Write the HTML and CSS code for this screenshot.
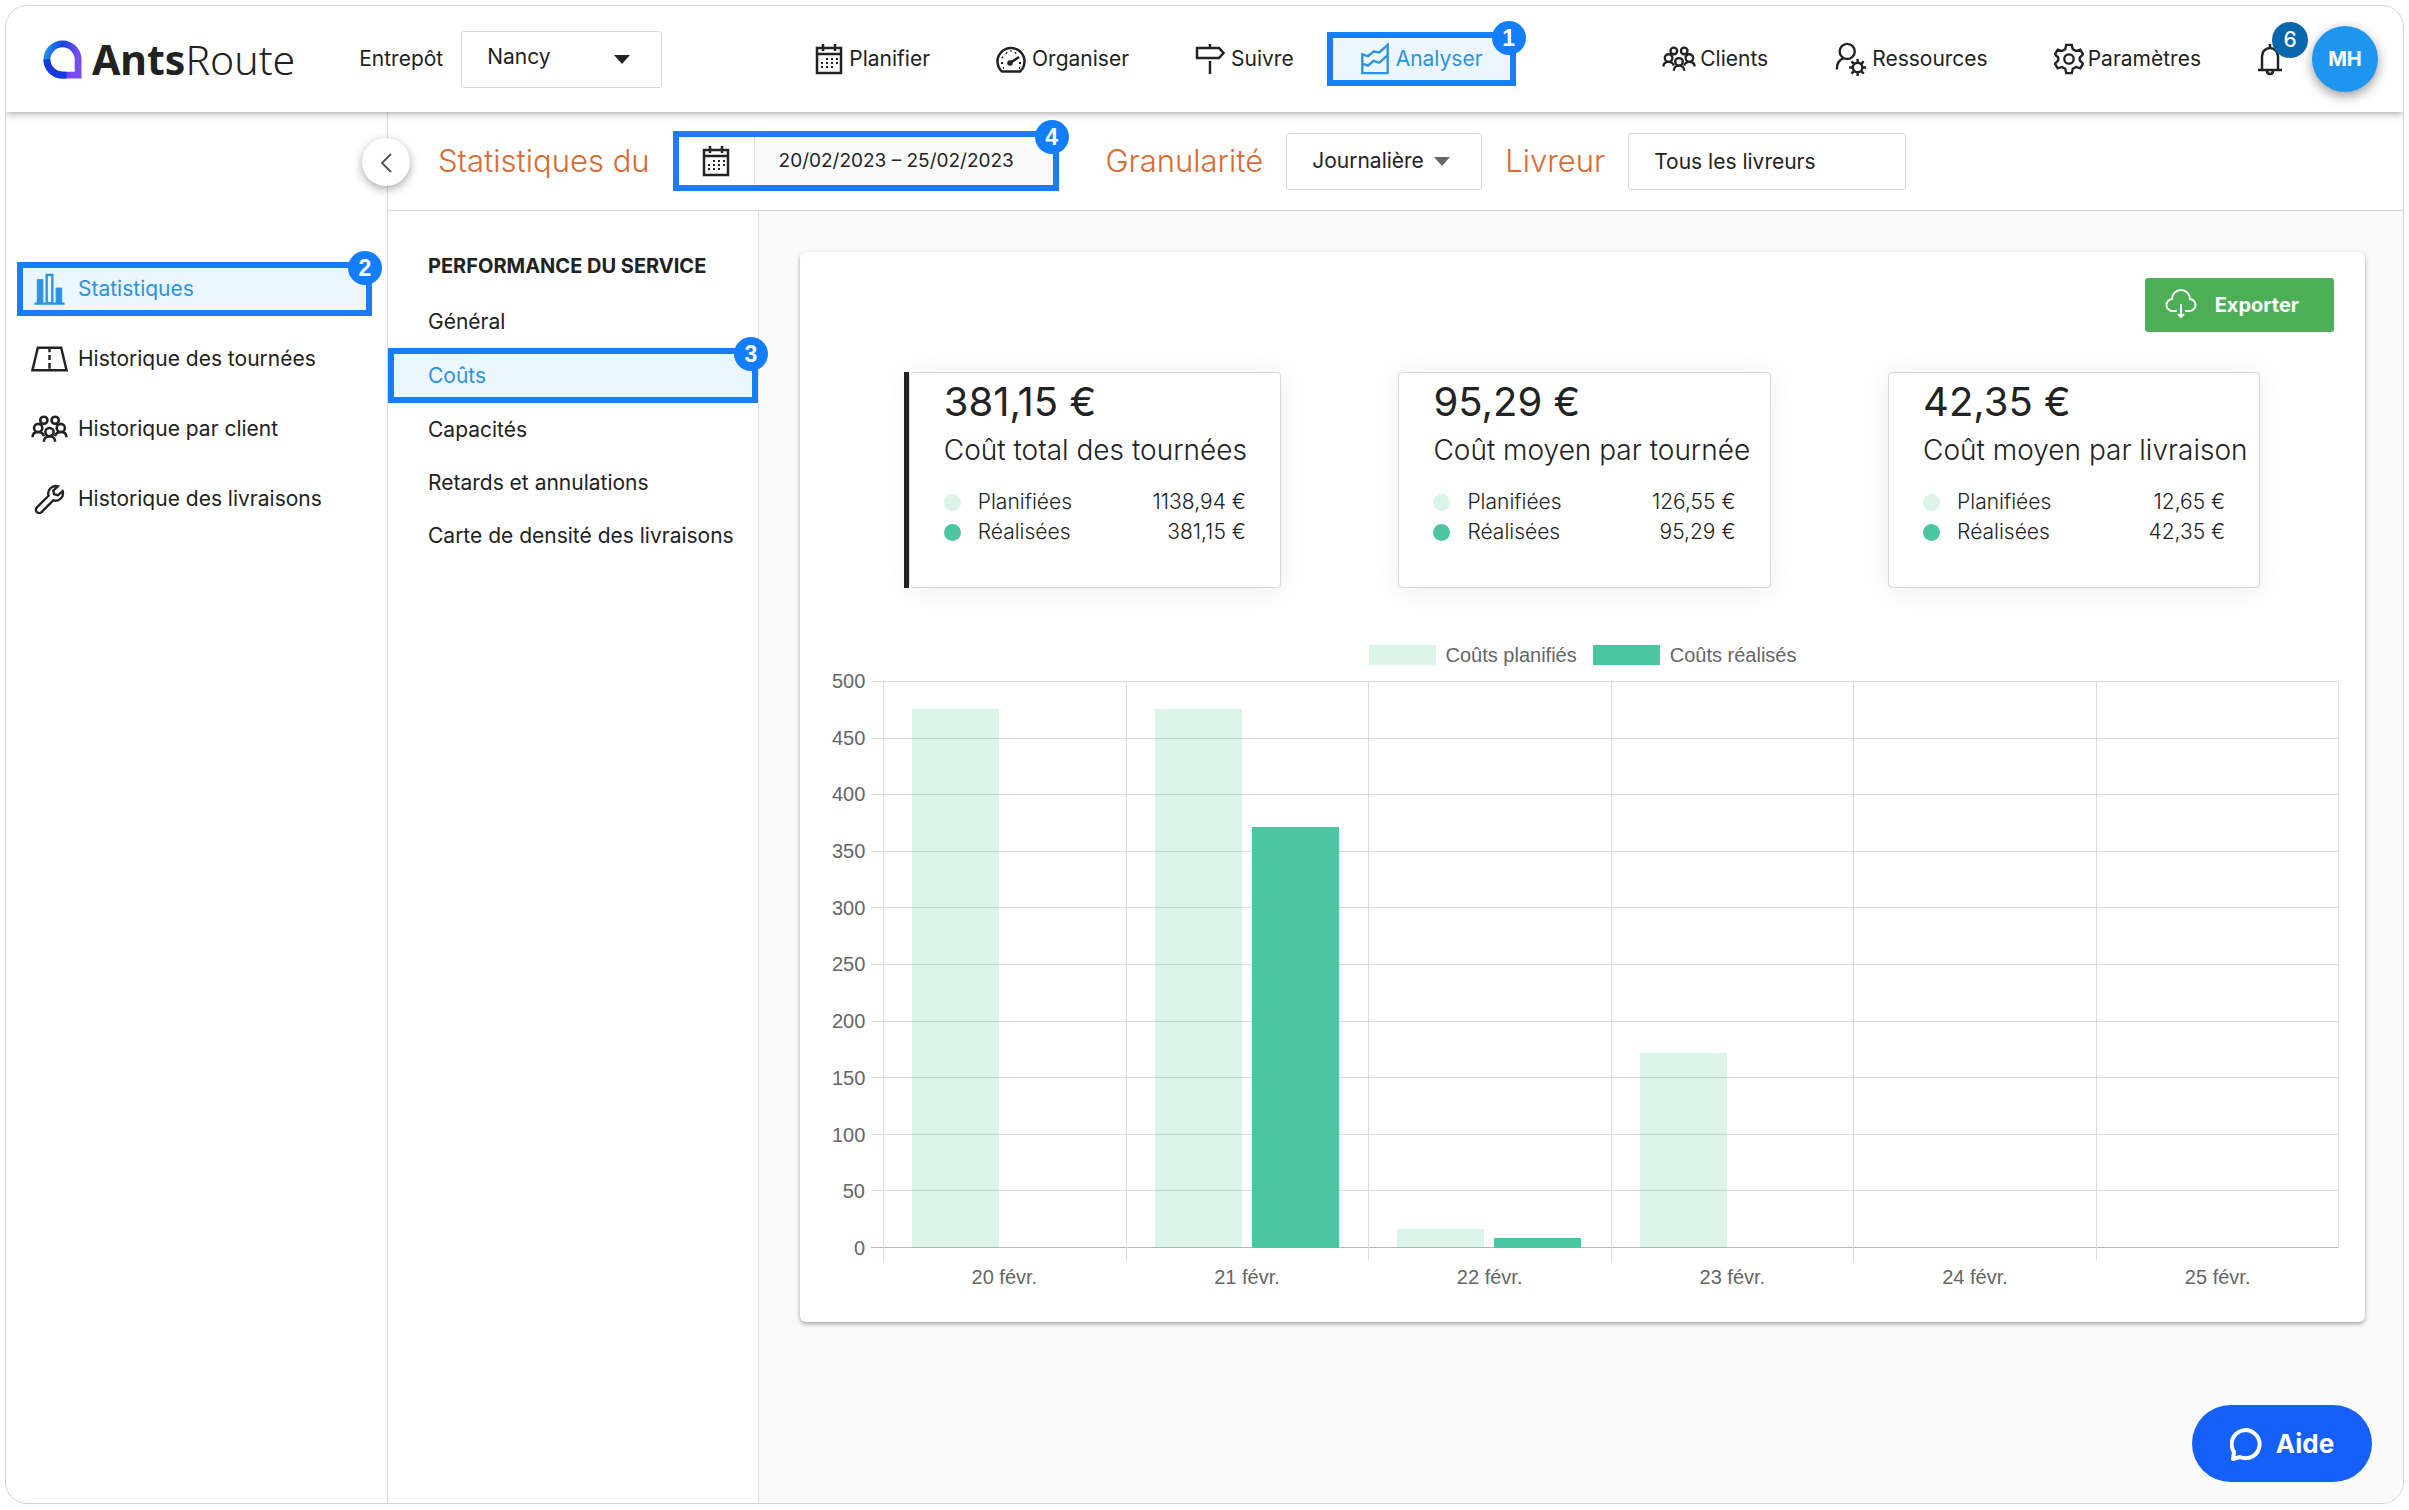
FILE: index.html
```html
<!DOCTYPE html>
<html lang="fr">
<head>
    <meta charset="UTF-8">
    <meta name="viewport" content="width=device-width, initial-scale=1.0">
    <title>AntsRoute - Statistiques</title>
    <link rel="stylesheet" href="styles.css">
</head>
<body>
    <!-- icônes partagées -->
    <svg class="sprite" aria-hidden="true">
        <symbol id="icon-calendar" viewBox="0 0 28 32">
            <path d="M2 5h24v25H2zM2 11h24M8 1v7M20 1v7"/>
            <path d="M11 16h2M16 16h2M21 16h2M6 20h2M11 20h2M16 20h2M21 20h2M6 24h2M11 24h2M16 24h2" stroke-width="2"/>
        </symbol>
        <symbol id="icon-people" viewBox="0 0 36 28">
            <circle cx="12.500" cy="5.500" r="3.500"/>
            <circle cx="23.500" cy="5.500" r="3.500"/>
            <circle cx="7" cy="13" r="4"/>
            <circle cx="29" cy="13" r="4"/>
            <circle cx="18" cy="17" r="4"/>
            <path d="M1.500 22c0-3 2-5 5.500-5s5 2 5.500 4M34.500 22c0-3-2-5-5.500-5s-5 2-5.500 4M12.500 26.500c0-3 2-5.500 5.500-5.500s5.500 2.500 5.500 5.500"/>
        </symbol>
    </svg>

    <div class="window">
        <header class="topbar">
            <a class="logo" href="#">
                <svg class="logo-mark" viewBox="0 0 40 40" aria-hidden="true">
                    <defs>
                        <linearGradient id="logo-blue" x1="0" y1="0" x2="1" y2="0.300">
                            <stop offset="0" stop-color="#2196f3"/>
                            <stop offset="0.450" stop-color="#1344dc"/>
                            <stop offset="1" stop-color="#7a4bf0"/>
                        </linearGradient>
                    </defs>
                    <path d="M20 4a16 16 0 0 0 0 32h16V20A16 16 0 0 0 20 4z" fill="none" stroke="url(#logo-blue)" stroke-width="7"/>
                    <path d="M4 20a16 16 0 0 0 16 16h4" fill="none" stroke="#1338e0" stroke-width="7"/>
                </svg>
                <span class="logo-text"><b>Ants</b>Route</span>
            </a>

            <div class="depot">
                <label for="depot">Entrepôt</label>
                <div class="select-box depot-select">
                    <select id="depot">
                        <option>Nancy</option>
                    </select>
                </div>
            </div>

            <nav class="nav nav-main">
                <a href="#">
                    <svg class="icon icon-cal" viewBox="0 0 28 32"><use href="#icon-calendar"/></svg>
                    Planifier
                </a>
                <a href="#">
                    <svg class="icon" viewBox="0 0 30 30">
                        <path d="M6 27.500A13.500 13.500 0 1 1 24 27.500z"/>
                        <path d="M14 19l9-6"/>
                        <circle cx="14" cy="19" r="1.500"/>
                        <path d="M5 19h2M6 13l1 1M10 8.500l1 1M15 6.500v1M20 8.500l-1 1M25 19h-2M7 24h1M23 24h1" stroke-width="2"/>
                    </svg>
                    Organiser
                </a>
                <a href="#">
                    <svg class="icon" viewBox="0 0 30 32">
                        <path d="M2 5h22l4.500 5-4.500 5H2zM15 1v4M15 18v13"/>
                    </svg>
                    Suivre
                </a>
                <a href="#" class="active framed">
                    <svg class="icon" viewBox="0 0 30 34">
                        <path d="M1.500 12l6 2 6-5 6 1 9-8v30h-27zM1.500 22l6 2 6-5 6 2 9-8"/>
                    </svg>
                    Analyser
                    <span class="step">1</span>
                </a>
            </nav>

            <nav class="nav nav-secondary">
                <a href="#">
                    <svg class="icon icon-wide" viewBox="0 0 36 28"><use href="#icon-people"/></svg>
                    Clients
                </a>
                <a href="#">
                    <svg class="icon icon-wide" viewBox="0 0 34 36">
                        <circle cx="13" cy="10" r="8"/>
                        <path d="M9 17c-5 2-7 6-7 12"/>
                        <circle cx="24" cy="27" r="5"/>
                        <path d="M24 27h.1M24 22v-4M24 32v4M19 27h-4M29 27h4M20.500 23.500l-3-3M27.500 23.500l3-3M20.500 30.500l-3 3M27.500 30.500l3 3"/>
                    </svg>
                    Ressources
                </a>
                <a href="#">
                    <svg class="icon" viewBox="0 0 32 34">
                        <path d="M13 2h6l1 4.500 3.500 2 4.500-1.500 3 5-3.500 3.500v3l3.500 3.500-3 5-4.500-1.500-3.500 2-1 4.500h-6l-1-4.500-3.500-2L4 27l-3-5 3.500-3.500v-3L1 12l3-5 4.500 1.500 3.500-2z"/>
                        <circle cx="16" cy="17" r="5"/>
                    </svg>
                    Paramètres
                </a>
            </nav>

            <div class="user">
                <button type="button" class="bell" aria-label="Notifications">
                    <svg class="icon" viewBox="0 0 28 34">
                        <path d="M6 27V14a8 8 0 0 1 16 0v13M2 28h24M14 2v4M11 29c0 4 6 4 6 0"/>
                    </svg>
                    <span class="bell-count">6</span>
                </button>
                <button type="button" class="avatar">MH</button>
            </div>
        </header>

        <div class="layout">
            <aside class="sidebar">
                <button type="button" class="collapse" aria-label="Réduire le menu">
                    <svg viewBox="0 0 14 22"><path d="M12 2L3 11l9 9"/></svg>
                </button>
                <a href="#" class="active framed">
                    <svg class="icon icon-stats" viewBox="0 0 34 34">
                        <path d="M1 32.500h32"/>
                        <path d="M4 7h6v25H4zM24 16h6v16h-6z" fill="currentColor" stroke-width="1"/>
                        <path d="M14 2h6v30h-6z"/>
                    </svg>
                    Statistiques
                    <span class="step">2</span>
                </a>
                <a href="#">
                    <svg class="icon" viewBox="0 0 38 26">
                        <path d="M7 1.500h24l5.500 23h-35zM19 2v4M19 9v5M19 17v6"/>
                    </svg>
                    Historique des tournées
                </a>
                <a href="#">
                    <svg class="icon" viewBox="0 0 36 28"><use href="#icon-people"/></svg>
                    Historique par client
                </a>
                <a href="#">
                    <svg class="icon icon-wrench" viewBox="0 0 32 32">
                        <path d="M25 2.500a8 8 0 0 0-10 10L2.500 25a3.500 3.500 0 0 0 5 5L20 17.500a8 8 0 0 0 10-10l-5 4.500-4-1-1-4z"/>
                    </svg>
                    Historique des livraisons
                </a>
            </aside>

            <div class="content">
                <form class="filters">
                    <label class="filter-label" for="period">Statistiques du</label>
                    <div class="period framed">
                        <button type="button" class="period-button" aria-label="Calendrier">
                            <svg class="icon icon-cal" viewBox="0 0 28 32"><use href="#icon-calendar"/></svg>
                        </button>
                        <input type="text" id="period" value="20/02/2023 – 25/02/2023">
                        <span class="step">4</span>
                    </div>
                    <label class="filter-label" for="granularity">Granularité</label>
                    <div class="select-box granularity-select">
                        <select id="granularity">
                            <option>Journalière</option>
                        </select>
                    </div>
                    <label class="filter-label" for="driver">Livreur</label>
                    <input type="text" id="driver" class="driver" value="Tous les livreurs">
                </form>

                <div class="page">
                    <nav class="submenu">
                        <h2>PERFORMANCE DU SERVICE</h2>
                        <a href="#">Général</a>
                        <a href="#" class="active framed">Coûts<span class="step">3</span></a>
                        <a href="#">Capacités</a>
                        <a href="#">Retards et annulations</a>
                        <a href="#">Carte de densité des livraisons</a>
                    </nav>

                    <main class="main">
                        <section class="panel">
                            <button type="button" class="export">
                                <svg class="icon" viewBox="0 0 32 28">
                                    <path d="M12 20H8a6 6 0 0 1-1-12 9 9 0 0 1 18 0 6 6 0 0 1-1 12h-4M16 13v12M13 23l3 3 3-3"/>
                                </svg>
                                Exporter
                            </button>

                            <div class="stats">
                                <article class="stat selected">
                                    <strong>381,15 €</strong>
                                    <h3>Coût total des tournées</h3>
                                    <p><i class="dot planned"></i>Planifiées<span>1138,94 €</span></p>
                                    <p><i class="dot done"></i>Réalisées<span>381,15 €</span></p>
                                </article>
                                <article class="stat">
                                    <strong>95,29 €</strong>
                                    <h3>Coût moyen par tournée</h3>
                                    <p><i class="dot planned"></i>Planifiées<span>126,55 €</span></p>
                                    <p><i class="dot done"></i>Réalisées<span>95,29 €</span></p>
                                </article>
                                <article class="stat">
                                    <strong>42,35 €</strong>
                                    <h3>Coût moyen par livraison</h3>
                                    <p><i class="dot planned"></i>Planifiées<span>12,65 €</span></p>
                                    <p><i class="dot done"></i>Réalisées<span>42,35 €</span></p>
                                </article>
                            </div>

                            <div class="chart">
                                <div class="legend">
                                    <span><i class="planned"></i>Coûts planifiés</span>
                                    <span><i class="done"></i>Coûts réalisés</span>
                                </div>
                                <div class="chart-body">
                                    <div class="y-axis">
                                        <span>500</span><span>450</span><span>400</span><span>350</span>
                                        <span>300</span><span>250</span><span>200</span><span>150</span>
                                        <span>100</span><span>50</span><span>0</span>
                                    </div>
                                    <div class="plot">
                                        <div class="lines">
                                            <i></i><i></i><i></i><i></i><i></i><i></i><i></i><i></i><i></i><i></i><i></i>
                                        </div>
                                        <div class="day">
                                            <div class="bar planned" style="height: 95%"></div>
                                            <div class="bar done" style="height: 0%"></div>
                                        </div>
                                        <div class="day">
                                            <div class="bar planned" style="height: 95%"></div>
                                            <div class="bar done" style="height: 74.2%"></div>
                                        </div>
                                        <div class="day">
                                            <div class="bar planned" style="height: 3.4%"></div>
                                            <div class="bar done" style="height: 1.8%"></div>
                                        </div>
                                        <div class="day">
                                            <div class="bar planned" style="height: 34.4%"></div>
                                            <div class="bar done" style="height: 0%"></div>
                                        </div>
                                        <div class="day"></div>
                                        <div class="day"></div>
                                    </div>
                                </div>
                                <div class="x-axis">
                                    <span>20 févr.</span><span>21 févr.</span><span>22 févr.</span>
                                    <span>23 févr.</span><span>24 févr.</span><span>25 févr.</span>
                                </div>
                            </div>
                        </section>
                    </main>
                </div>
            </div>
        </div>

        <button type="button" class="help">
            <svg class="icon" viewBox="0 0 32 34">
                <path d="M3 32l1-7a14 14 0 1 1 6 5z"/>
            </svg>
            Aide
        </button>
    </div>
</body>
</html>
```

FILE: styles.css
```css
* {
    box-sizing: border-box;
}
body {
    margin: 5px 5px 6px;
    background: #fff;
    color: #222;
    font-family: Inter, "Open Sans", sans-serif;
    font-size: 21px;
    line-height: 30px;
}
a {
    color: inherit;
    text-decoration: none;
}
button,
input,
select {
    font: inherit;
    color: inherit;
}
button {
    padding: 0;
    border: none;
    background: none;
    cursor: pointer;
}
.sprite {
    display: none;
}
.icon {
    flex: none;
    width: 30px;
    height: 32px;
    fill: none;
    stroke: currentColor;
    stroke-width: 2.5;
}
.window {
    position: relative;
    display: flex;
    flex-direction: column;
    min-height: calc(100vh - 11px);
    border: 1px solid #d4d4d4;
    border-radius: 22px;
    overflow: hidden;
}

/* repères numérotés */
.framed {
    position: relative;
    border: 6px solid #1a7df5;
}
.active {
    background: #ecf6fe;
    color: #2b93e0;
}
.step {
    position: absolute;
    z-index: 2;
    top: -17px;
    right: -16px;
    width: 34px;
    height: 34px;
    border-radius: 50%;
    background: #137efb;
    color: #fff;
    font-family: "Liberation Sans", Arial, sans-serif;
    font-size: 23px;
    font-weight: 700;
    line-height: 34px;
    text-align: center;
}

/* barre du haut */
.topbar {
    position: relative;
    z-index: 3;
    display: flex;
    align-items: center;
    height: 106px;
    padding: 0 25px 0 37px;
    background: #fff;
    box-shadow: 0 1px 8px rgba(0, 0, 0, 0.4);
}
.logo {
    display: flex;
    align-items: center;
    gap: 10px;
}
.logo-mark {
    width: 39px;
    height: 39px;
}
.logo-text {
    font-family: "Noto Sans", sans-serif;
    font-size: 41px;
    font-weight: 300;
    line-height: 54px;
}
.logo-text b {
    font-weight: 700;
}
.depot {
    display: flex;
    align-items: center;
    gap: 18px;
    margin-left: 64px;
}
.select-box {
    position: relative;
}
.select-box::after {
    content: "";
    position: absolute;
    top: 24px;
    right: 32px;
    border: 8px solid transparent;
    border-top: 9px solid #222;
    border-bottom: none;
    pointer-events: none;
}
.select-box select,
.driver {
    width: 100%;
    height: 57px;
    padding: 0 25px;
    border: 1px solid #d8d8d8;
    border-radius: 3px;
    background: #fff;
    appearance: none;
}
.depot-select {
    width: 201px;
}
.depot-select select {
    padding-bottom: 4px;
}
.nav {
    display: flex;
}
.nav a {
    display: flex;
    align-items: center;
    gap: 6px;
    height: 54px;
    padding: 0 27px;
    border: 6px solid transparent;
}
.nav a.framed {
    border-color: #1a7df5;
}
.nav-main {
    margin-left: 120px;
}
.nav-secondary {
    margin-left: auto;
}
.nav-secondary a {
    gap: 4px;
}
.icon-wide {
    width: 34px;
    height: 34px;
}
.icon-cal {
    width: 28px;
}
.user {
    display: flex;
    align-items: center;
    gap: 28px;
    margin-left: 22px;
}
.bell {
    position: relative;
    height: 34px;
}
.bell .icon {
    width: 28px;
    height: 34px;
}
.bell-count {
    position: absolute;
    top: -20px;
    right: -24px;
    width: 36px;
    height: 36px;
    border-radius: 50%;
    background: #0866ac;
    color: #fff;
    font-weight: 500;
    line-height: 36px;
}
.avatar {
    width: 66px;
    height: 66px;
    border-radius: 50%;
    background: #1e96f0;
    box-shadow: 0 4px 12px rgba(0, 0, 0, 0.4);
    color: #fff;
    font-size: 20px;
    font-weight: 700;
}

/* menu de gauche */
.layout {
    display: flex;
    flex: 1;
}
.sidebar {
    position: relative;
    display: flex;
    flex: none;
    flex-direction: column;
    gap: 16px;
    width: 382px;
    padding: 150px 15px 0 11px;
    border-right: 1px solid #d8d8d8;
}
.sidebar a {
    display: flex;
    align-items: center;
    gap: 10px;
    height: 54px;
    padding-left: 8px;
    border: 6px solid transparent;
}
.sidebar a.framed {
    border-color: #1a7df5;
}
.sidebar .icon {
    width: 37px;
}
.sidebar .icon-wrench {
    height: 30px;
}
.collapse {
    position: absolute;
    z-index: 2;
    top: 26px;
    right: -23px;
    width: 48px;
    height: 48px;
    border-radius: 50%;
    background: #fff;
    box-shadow: 0 3px 10px rgba(0, 0, 0, 0.35);
}
.collapse svg {
    width: 14px;
    height: 22px;
    fill: none;
    stroke: #555;
    stroke-width: 2;
    vertical-align: middle;
}

/* filtres */
.content {
    display: flex;
    flex: 1;
    flex-direction: column;
}
.filters {
    display: flex;
    align-items: center;
    gap: 23px;
    height: 99px;
    padding-left: 50px;
    border-bottom: 1px solid #d8d8d8;
}
.filter-label {
    color: #d86a32;
    font-size: 31px;
    font-weight: 300;
}
.period {
    display: flex;
    width: 386px;
    height: 60px;
    margin-right: 24px;
    background: #fafafa;
}
.period-button {
    width: 76px;
    border-right: 1px solid #e4e4e4;
    background: #fff;
}
.period .icon {
    vertical-align: middle;
}
.period input {
    flex: 1;
    min-width: 0;
    padding: 0 0 0 24px;
    border: none;
    background: none;
    font-size: 19px;
}
.granularity-select {
    width: 196px;
}
.granularity-select::after {
    border-top-color: #666;
}
.driver {
    width: 278px;
}

/* sous-menu */
.page {
    display: flex;
    flex: 1;
    background: #fafafa;
}
.submenu {
    flex: none;
    width: 371px;
    padding-top: 40px;
    border-right: 1px solid #e0e0e0;
    background: #fff;
}
.submenu h2 {
    margin: 0 0 14px;
    padding-left: 40px;
    font-size: 20px;
    font-weight: 700;
}
.submenu a {
    display: flex;
    align-items: center;
    height: 53px;
    padding-left: 40px;
}
.submenu a.framed {
    height: 55px;
    padding-left: 34px;
}

/* panneau */
.main {
    flex: 1;
    padding: 41px 38px 41px 41px;
}
.panel {
    padding: 26px 26px 30px 32px;
    border-radius: 6px;
    background: #fff;
    box-shadow: 0 2px 4px rgba(0, 0, 0, 0.35);
}
.export {
    display: flex;
    align-items: center;
    gap: 18px;
    height: 54px;
    margin: 0 5px 0 auto;
    padding: 0 35px 0 20px;
    border-radius: 3px;
    background: #4caf56;
    color: #fff;
    font-size: 20px;
    font-weight: 700;
}
.export .icon {
    width: 32px;
    stroke-width: 2;
}
.stats {
    display: grid;
    grid-template-columns: repeat(3, 1fr);
    justify-items: center;
    margin: 40px 20px 0 18px;
}
.stat {
    position: relative;
    width: 76%;
    height: 216px;
    padding: 7px 0 0 34px;
    border: 1px solid #d8d8d8;
    border-radius: 4px;
    box-shadow: 0 2px 24px rgba(0, 0, 0, 0.08);
    white-space: nowrap;
}
.stat.selected::before {
    content: "";
    position: absolute;
    top: -1px;
    bottom: -1px;
    left: -6px;
    width: 5px;
    background: #222;
}
.stat strong {
    display: block;
    font-size: 40px;
    font-weight: 400;
    line-height: 44px;
}
.stat h3 {
    margin: 8px 0 19px;
    font-size: 28px;
    font-weight: 300;
    line-height: 36px;
}
.stat p {
    display: flex;
    align-items: center;
    margin: 0;
    padding-right: 34px;
    font-weight: 300;
}
.stat p span {
    margin-left: auto;
}
.dot {
    width: 17px;
    height: 17px;
    margin-right: 17px;
    border-radius: 50%;
}
.planned {
    background: rgba(72, 200, 150, 0.2);
}
.done {
    background: #4cc5a3;
}

/* graphique */
.chart {
    margin-top: 52px;
    color: #666;
    font-family: "Liberation Sans", Arial, sans-serif;
    font-size: 20px;
}
.legend {
    display: flex;
    justify-content: center;
    gap: 16px;
    padding-right: 6px;
}
.legend span {
    display: flex;
    align-items: center;
    gap: 10px;
}
.legend i {
    width: 67px;
    height: 20px;
}
.chart-body {
    display: flex;
    gap: 18px;
    margin-top: 11px;
}
.y-axis {
    display: flex;
    flex-direction: column;
    justify-content: space-between;
    width: 33px;
    margin: -15px 0;
    line-height: 30px;
    text-align: right;
}
.plot {
    position: relative;
    display: grid;
    flex: 1;
    grid-template-columns: repeat(6, 1fr);
    height: 567px;
    border-right: 1px solid #e4e4e4;
}
.lines {
    position: absolute;
    top: 0;
    right: 0;
    bottom: 0;
    left: -12px;
    display: flex;
    flex-direction: column;
    justify-content: space-between;
}
.lines i {
    height: 1px;
    background: rgba(0, 0, 0, 0.14);
}
.lines i:last-child {
    background: rgba(0, 0, 0, 0.28);
}
.day {
    position: relative;
    display: flex;
    align-items: flex-end;
    gap: 10px;
    padding: 0 12%;
}
/* trait vertical prolongé sous l'axe */
.day::before {
    content: "";
    position: absolute;
    top: 0;
    bottom: -13px;
    left: 0;
    width: 1px;
    background: #dcdcdc;
}
.bar {
    flex: 1;
}
.x-axis {
    display: grid;
    grid-template-columns: repeat(6, 1fr);
    margin: 14px 0 0 51px;
    text-align: center;
}

/* bouton d'aide */
.help {
    position: absolute;
    right: 31px;
    bottom: 21px;
    display: flex;
    align-items: center;
    justify-content: center;
    gap: 14px;
    width: 180px;
    height: 77px;
    border-radius: 39px;
    background: #1560fb;
    color: #fff;
    font-size: 26px;
    font-weight: 700;
}
.help .icon {
    width: 32px;
    height: 34px;
    stroke-width: 4;
    stroke-linejoin: round;
}
```
